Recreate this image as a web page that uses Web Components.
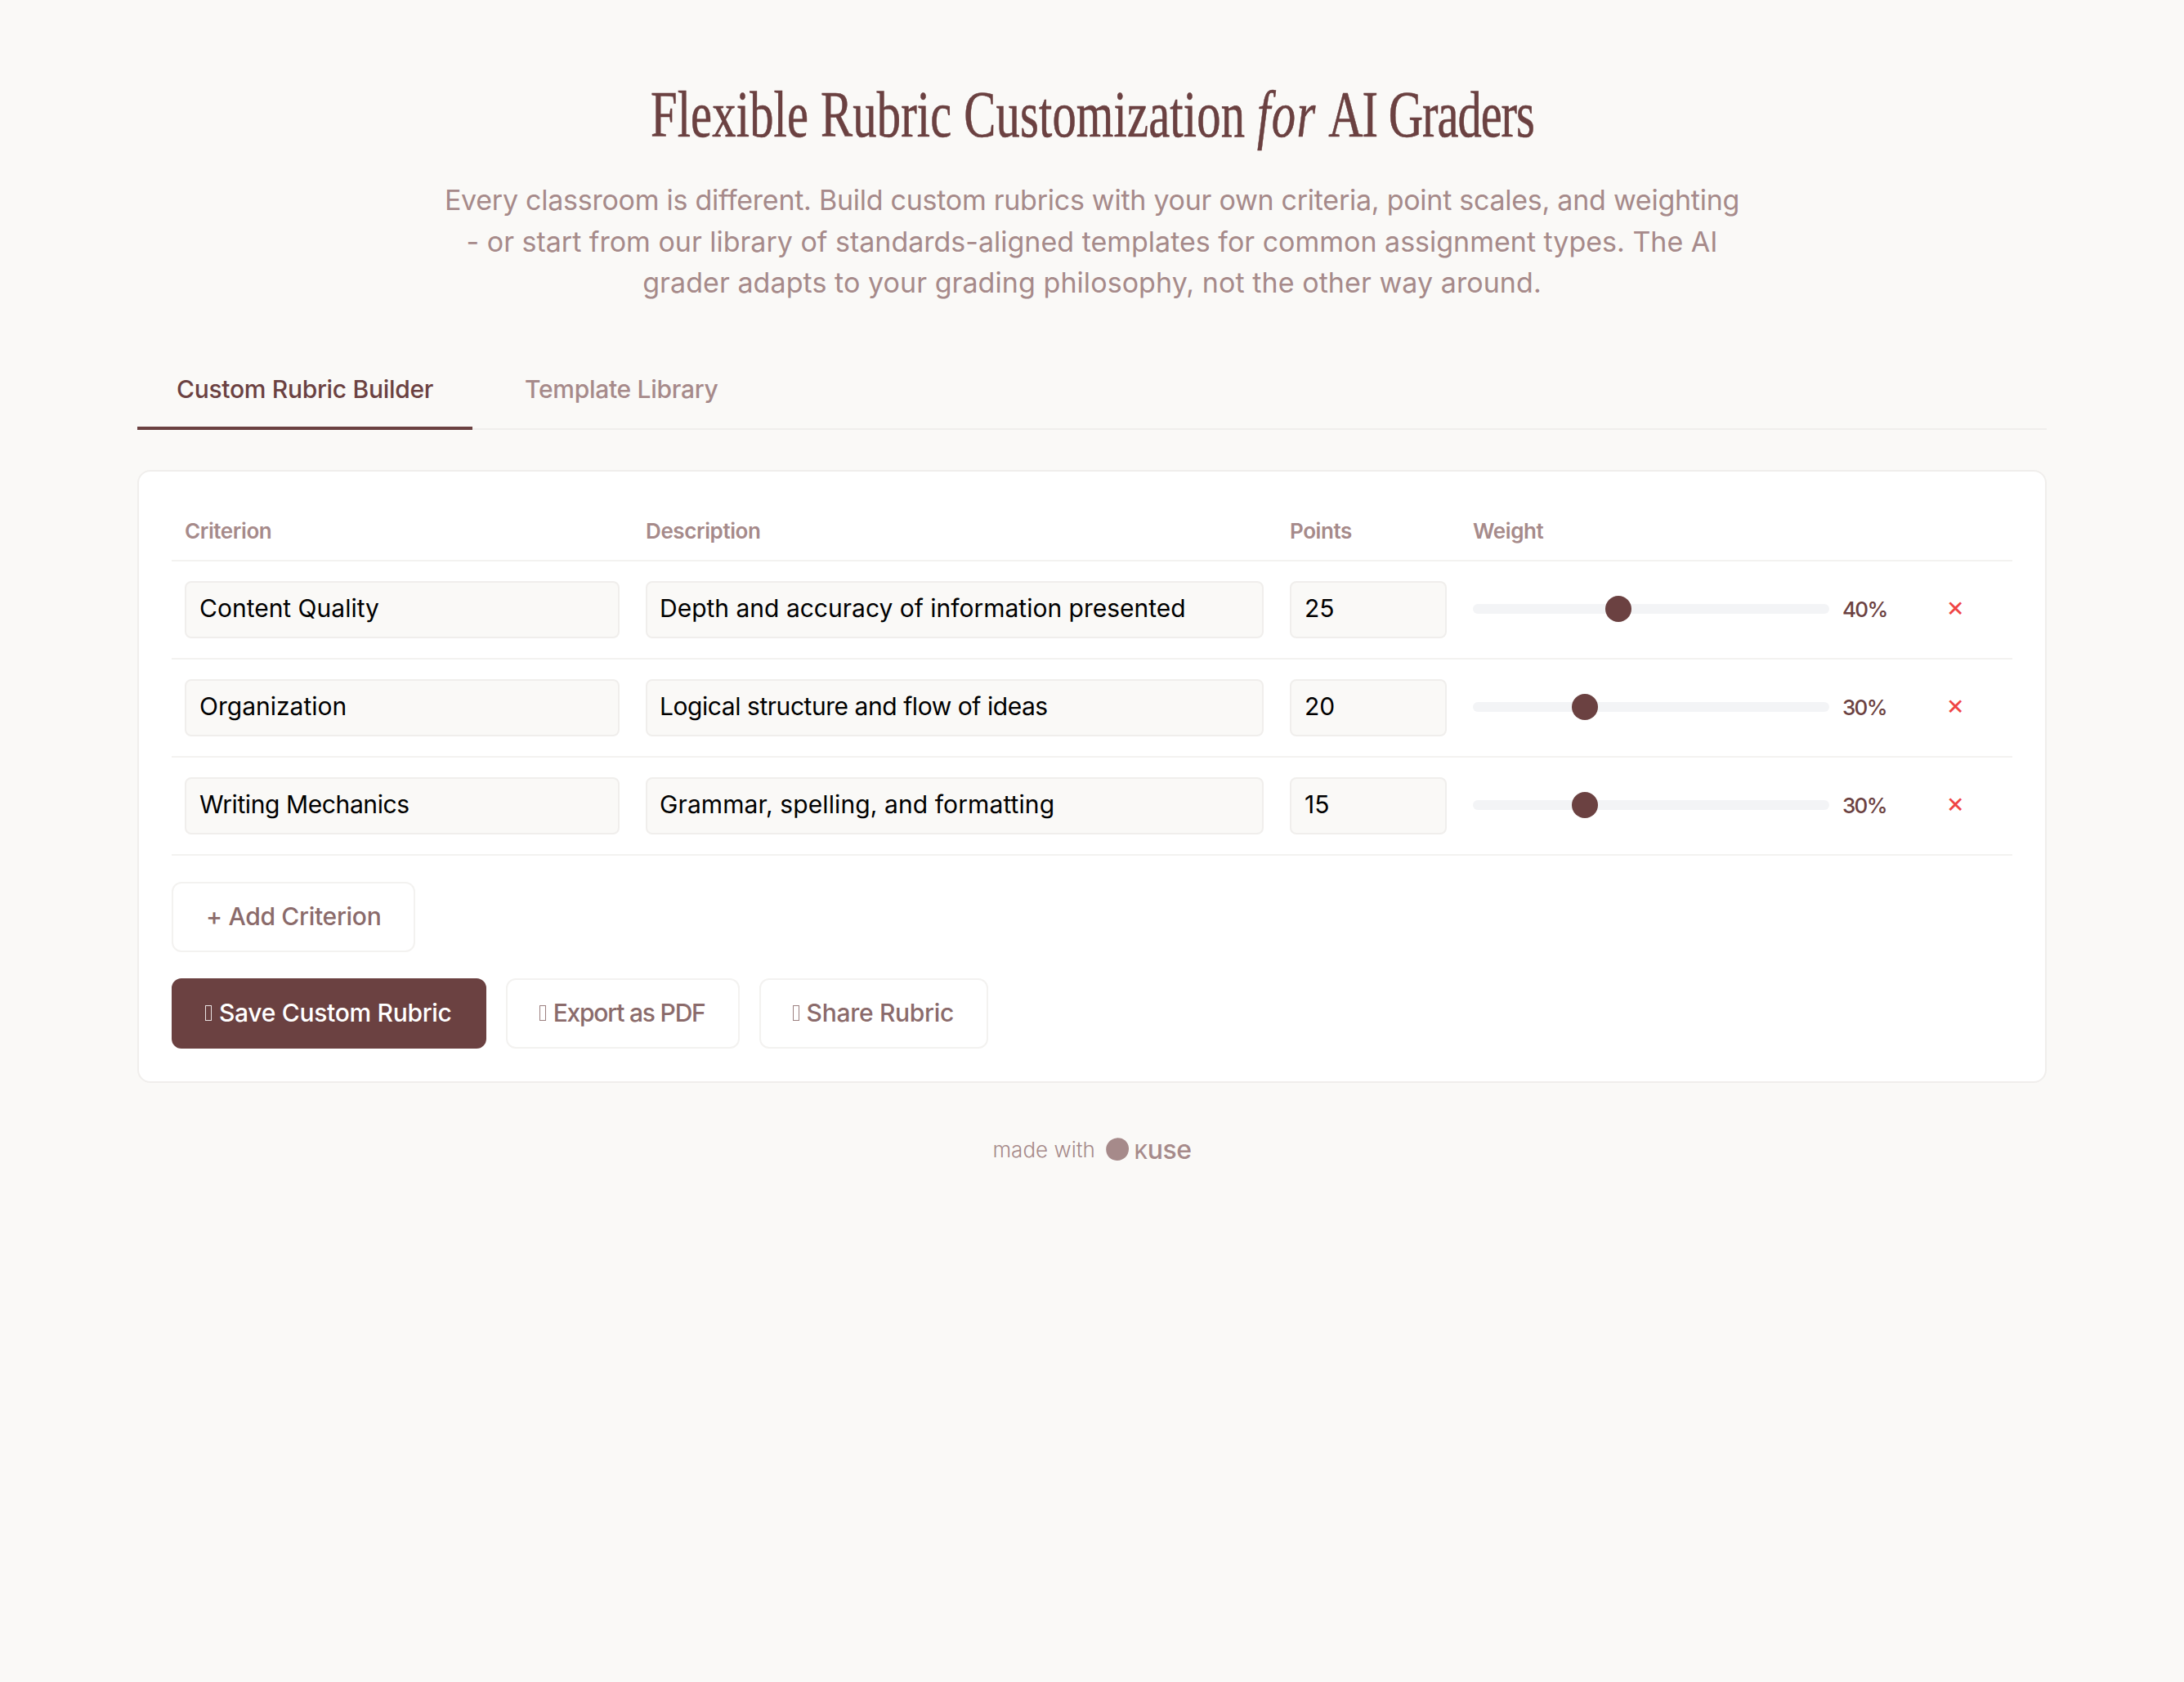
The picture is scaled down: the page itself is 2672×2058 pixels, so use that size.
<!DOCTYPE html>
<html>
<head>
<meta charset="utf-8">
<title>Rubric Customization</title>
<style>
  html, body { margin: 0; background: #faf9f7; }
  body { font-family: Inter, "Noto Sans", sans-serif; min-height: 2058px; }
  .page { display: flex; flex-direction: column; padding: 0 168px; }
</style>
</head>
<body>
<div class="page">
  <rubric-intro>
    <span slot="title"><span style="letter-spacing:0.24px">Flexible Rubric Customization </span><em style="letter-spacing:2px">for</em> <span style="letter-spacing:-1.4px">AI Graders</span></span>
    Every classroom is different. Build custom rubrics with your own criteria, point scales, and weighting<br>
    <span style="letter-spacing:0">- or start from our library of standards-aligned templates for common assignment types. The AI</span><br>
    <span style="letter-spacing:0.07px">grader adapts to your grading philosophy, not the other way around.</span>
  </rubric-intro>
  <tab-bar>
    <tab-item active>Custom Rubric Builder</tab-item>
    <tab-item>Template Library</tab-item>
  </tab-bar>
  <rubric-card>
    <rubric-head></rubric-head>
    <rubric-row name="Content Quality" desc="Depth and accuracy of information presented" points="25" weight="40"></rubric-row>
    <rubric-row style="--desc-spacing:-0.45px" name="Organization" desc="Logical structure and flow of ideas" points="20" weight="30"></rubric-row>
    <rubric-row style="--name-spacing:-0.4px;--desc-spacing:0.1px" name="Writing Mechanics" desc="Grammar, spelling, and formatting" points="15" weight="30"></rubric-row>
    <div slot="add"><rubric-button>+ Add Criterion</rubric-button></div>
    <rubric-button slot="actions" primary><glyph-box></glyph-box>Save Custom Rubric</rubric-button>
    <rubric-button slot="actions" style="letter-spacing:-1.2px"><glyph-box></glyph-box>Export as PDF</rubric-button>
    <rubric-button slot="actions"><glyph-box></glyph-box>Share Rubric</rubric-button>
  </rubric-card>
  <made-with></made-with>
</div>

<script>
const COLUMNS = '564px 788px 224px 560px 116px';

class RubricIntro extends HTMLElement {
  constructor() {
    super();
    this.attachShadow({ mode: 'open' }).innerHTML = `
      <style>
        :host { display: block; text-align: center; padding-top: 92px; }
        h1 {
          margin: 0; font: 400 80px/96px "Liberation Serif", serif; color: #6b4141;
          white-space: nowrap; display: inline-block; transform: scaleX(0.732);
          -webkit-text-stroke: 0.6px #6b4141;
        }
        p {
          margin: 32px 0 60.5px; font-size: 34px; line-height: 50.5px; color: #a68a8a;
          white-space: nowrap; letter-spacing: -0.26px;
        }
      </style>
      <h1><slot name="title"></slot></h1>
      <p><slot></slot></p>`;
  }
}

class TabBar extends HTMLElement {
  constructor() {
    super();
    this.attachShadow({ mode: 'open' }).innerHTML = `
      <style>
        :host { display: flex; gap: 16px; border-bottom: 2px solid #f0eeec; margin-bottom: 49px; }
      </style>
      <slot></slot>`;
  }
}

class TabItem extends HTMLElement {
  constructor() {
    super();
    this.attachShadow({ mode: 'open' }).innerHTML = `
      <style>
        :host {
          display: block; padding: 23px 48px 25px; font-size: 30px; line-height: 42px; font-weight: 500;
          letter-spacing: -0.3px; color: #a68a8a; border-bottom: 4px solid transparent; margin-bottom: -2px;
        }
        :host([active]) { color: #6b4141; border-bottom-color: #6b4141; }
      </style>
      <slot></slot>`;
  }
}

class RubricCard extends HTMLElement {
  constructor() {
    super();
    this.attachShadow({ mode: 'open' }).innerHTML = `
      <style>
        :host {
          display: block; background: #fff; border: 2px solid #f0eeec; border-radius: 16px;
          padding: 40px;
        }
        .add { margin-top: 32px; display: flex; }
        .actions { margin-top: 32px; display: flex; gap: 24px; }
      </style>
      <slot></slot>
      <div class="add"><slot name="add"></slot></div>
      <div class="actions"><slot name="actions"></slot></div>`;
  }
}

class RubricHead extends HTMLElement {
  constructor() {
    super();
    this.attachShadow({ mode: 'open' }).innerHTML = `
      <style>
        :host {
          display: grid; grid-template-columns: ${COLUMNS}; height: 65px; padding-bottom: 3px; align-items: center;
          border-bottom: 2px solid #f3f2f0; font-size: 26px; font-weight: 600; color: #a68a8a;
          letter-spacing: -0.4px;
        }
        span { padding-left: 16px; }
      </style>
      <span>Criterion</span><span>Description</span><span>Points</span><span>Weight</span><span></span>`;
  }
}

class RubricRow extends HTMLElement {
  constructor() {
    super();
    const weight = this.getAttribute('weight');
    this.attachShadow({ mode: 'open' }).innerHTML = `
      <style>
        :host {
          display: grid; grid-template-columns: ${COLUMNS}; height: 118px; align-items: center;
          border-bottom: 2px solid #f3f2f0;
        }
        .cell { padding: 0 16px; }
        .field {
          height: 66px; line-height: 63px; padding: 0 16px; background: #faf9f7;
          border: 2px solid #f0eeec; border-radius: 8px; font-size: 30px; color: #000;
          white-space: nowrap;
        }
        .name { letter-spacing: var(--name-spacing, 0); }
        .desc { letter-spacing: var(--desc-spacing, 0); padding-left: 15px; }
        .weight { display: flex; align-items: center; gap: 16px; }
        input {
          -webkit-appearance: none; appearance: none; width: 436px; height: 12px; margin: 0 0 2px;
          background: #f3f4f6; border-radius: 6px; flex: none;
        }
        input::-webkit-slider-thumb {
          -webkit-appearance: none; width: 32px; height: 32px; border-radius: 50%;
          background: #6b4141;
        }
        .pct { font-size: 26px; font-weight: 500; color: #6b4141; letter-spacing: -1.7px; margin-bottom: 2px; }
        .del { color: #ef4444; font-size: 34px; line-height: 38px; padding: 0 0 8px 35px; }
      </style>
      <div class="cell"><div class="field name">${this.getAttribute('name')}</div></div>
      <div class="cell"><div class="field desc">${this.getAttribute('desc')}</div></div>
      <div class="cell"><div class="field">${this.getAttribute('points')}</div></div>
      <div class="cell weight">
        <input type="range" min="0" max="100" value="${weight}">
        <span class="pct">${weight}%</span>
      </div>
      <div class="del">×</div>`;
  }
}

class RubricButton extends HTMLElement {
  constructor() {
    super();
    this.attachShadow({ mode: 'open' }).innerHTML = `
      <style>
        :host {
          display: flex; align-items: center; height: 79px; padding: 0 40px 3px; background: #fff;
          border: 2px solid #f3f2f0; border-radius: 12px; font-size: 30px; font-weight: 500;
          letter-spacing: -0.3px; color: #8b6b6b; white-space: pre;
        }
        :host([primary]) { background: #6b4141; border-color: #6b4141; color: #fff; }
      </style>
      <slot></slot>`;
  }
}

// the reference shows an empty "no glyph" box in front of the button labels
class GlyphBox extends HTMLElement {
  constructor() {
    super();
    this.attachShadow({ mode: 'open' }).innerHTML = `
      <style>
        :host {
          display: block; box-sizing: border-box; width: 8px; height: 19px; margin: 2px 9px 0 -1px;
          border: 1px solid currentColor; opacity: 0.85;
        }
      </style>`;
  }
}

class MadeWith extends HTMLElement {
  constructor() {
    super();
    this.attachShadow({ mode: 'open' }).innerHTML = `
      <style>
        :host {
          display: flex; justify-content: center; align-items: center; gap: 13px;
          margin-top: 64px; height: 34px; color: #a68a8a; font-size: 26px; font-weight: 300;
        }
        svg { width: 28px; height: 28px; display: block; }
        .logo { display: flex; align-items: center; gap: 7px; font-size: 32px; font-weight: 500; letter-spacing: -0.5px; }
        .k { font-size: 24px; text-transform: uppercase; }
      </style>
      <span>made with</span>
      <span class="logo">
        <svg viewBox="0 0 28 28"><path fill="#a68a8a" d="M13 .4C20.5-.4 27.6 4.600 28 12.600c.4 8.600-5.400 15.200-14 15.400C5.800 28.200.4 22.400.2 14.600 0 7 5.600 1.200 13 .4Z"/></svg>
        <span><span class="k">k</span>use</span>
      </span>`;
  }
}

customElements.define('rubric-intro', RubricIntro);
customElements.define('tab-bar', TabBar);
customElements.define('tab-item', TabItem);
customElements.define('rubric-card', RubricCard);
customElements.define('rubric-head', RubricHead);
customElements.define('rubric-row', RubricRow);
customElements.define('rubric-button', RubricButton);
customElements.define('glyph-box', GlyphBox);
customElements.define('made-with', MadeWith);
</script>
</body>
</html>
